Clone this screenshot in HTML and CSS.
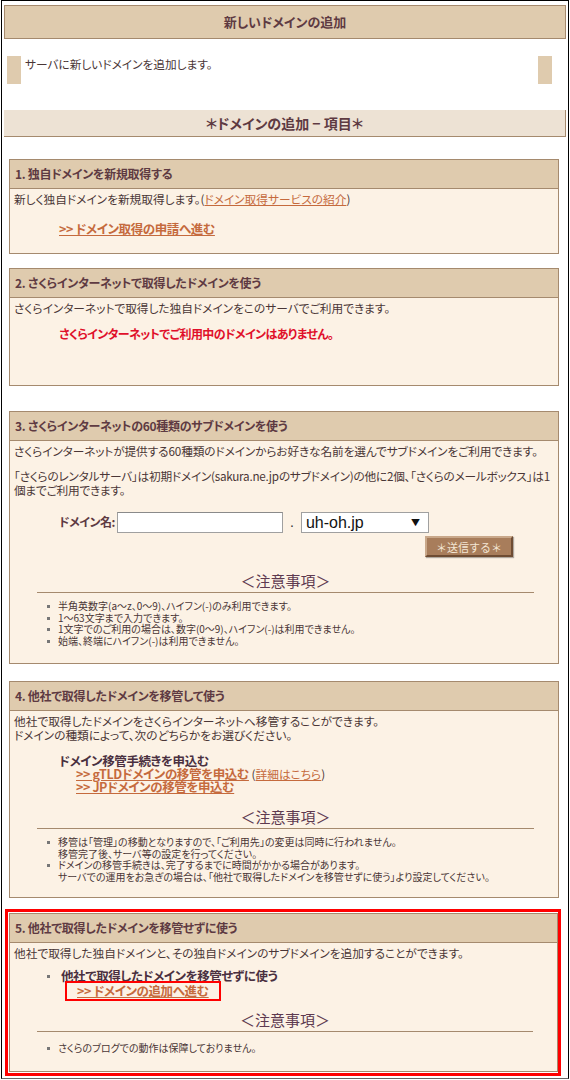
FILE: index.html
```html
<!DOCTYPE html>
<html lang="ja">
<head>
    <meta charset="UTF-8">
    <meta name="viewport" content="width=device-width, initial-scale=1.0">
    <title>新しいドメインの追加</title>
    <link rel="stylesheet" href="styles.css">
</head>
<body>

<div class="page">

    <!-- Page title -->
    <h1 class="page-title">新しいドメインの追加</h1>

    <div class="lead">
        <span class="lead-mark"></span>
        <p class="lead-text">サーバに新しいドメインを追加します。</p>
        <span class="lead-mark"></span>
    </div>

    <h2 class="list-title">＊ドメインの追加 − 項目＊</h2>

    <!-- 1 -->
    <section class="item item-1">
        <h3 class="item-head">1. 独自ドメインを新規取得する</h3>
        <div class="item-body">
            <p>新しく独自ドメインを新規取得します。(<a href="#" class="link-plain">ドメイン取得サービスの紹介</a>)</p>
            <p class="go"><a href="#" class="link-go">&gt;&gt; ドメイン取得の申請へ進む</a></p>
        </div>
    </section>

    <!-- 2 -->
    <section class="item item-2">
        <h3 class="item-head">2. さくらインターネットで取得したドメインを使う</h3>
        <div class="item-body">
            <p>さくらインターネットで取得した独自ドメインをこのサーバでご利用できます。</p>
            <p class="go alert">さくらインターネットでご利用中のドメインはありません。</p>
        </div>
    </section>

    <!-- 3 -->
    <section class="item item-3">
        <h3 class="item-head">3. さくらインターネットの60種類のサブドメインを使う</h3>
        <div class="item-body">
            <p class="tight">さくらインターネットが提供する60種類のドメインからお好きな名前を選んでサブドメインをご利用できます。</p>
            <p class="para">「さくらのレンタルサーバ」は初期ドメイン(sakura.ne.jpのサブドメイン)の他に2個、「さくらのメールボックス」は1個までご利用できます。</p>

            <form class="domain-form">
                <div class="form-row">
                    <label class="form-label" for="sub">ドメイン名:</label>
                    <input class="form-input" type="text" id="sub">
                    <span class="form-dot">.</span>
                    <span class="select-wrap">
                        <select class="form-select">
                            <option>uh-oh.jp</option>
                        </select>
                        <span class="select-arrow">▼</span>
                    </span>
                </div>
                <div class="form-submit">
                    <button type="button" class="btn-send">＊送信する＊</button>
                </div>
            </form>

            <div class="notes">
                <h4 class="notes-title">＜注意事項＞</h4>
                <ul class="notes-list">
                    <li>半角英数字(a～z、0～9)、ハイフン(-)のみ利用できます。</li>
                    <li>1～63文字まで入力できます。</li>
                    <li>1文字でのご利用の場合は、数字(0～9)、ハイフン(-)は利用できません。</li>
                    <li>始端、終端にハイフン(-)は利用できません。</li>
                </ul>
            </div>
        </div>
    </section>

    <!-- 4 -->
    <section class="item item-4">
        <h3 class="item-head">4. 他社で取得したドメインを移管して使う</h3>
        <div class="item-body">
            <p>他社で取得したドメインをさくらインターネットへ移管することができます。<br>ドメインの種類によって、次のどちらかをお選びください。</p>
            <div class="transfer">
                <p class="sub-head">ドメイン移管手続きを申込む</p>
                <p class="sub-link"><a href="#" class="link-go">&gt;&gt; gTLDドメインの移管を申込む</a> (<a href="#" class="link-plain">詳細はこちら</a>)</p>
                <p class="sub-link"><a href="#" class="link-go">&gt;&gt; JPドメインの移管を申込む</a></p>
            </div>

            <div class="notes">
                <h4 class="notes-title">＜注意事項＞</h4>
                <ul class="notes-list">
                    <li>移管は「管理」の移動となりますので、「ご利用先」の変更は同時に行われません。<br>移管完了後、サーバ等の設定を行ってください。</li>
                    <li>ドメインの移管手続きは、完了するまでに時間がかかる場合があります。<br>サーバでの運用をお急ぎの場合は、「他社で取得したドメインを移管せずに使う」より設定してください。</li>
                </ul>
            </div>
        </div>
    </section>

    <!-- 5 (highlighted) -->
    <div class="highlight">
        <section class="item item-5">
            <h3 class="item-head">5. 他社で取得したドメインを移管せずに使う</h3>
            <div class="item-body">
                <p>他社で取得した独自ドメインと、その独自ドメインのサブドメインを追加することができます。</p>
                <ul class="choice">
                    <li>
                        <span class="sub-head">他社で取得したドメインを移管せずに使う</span><br>
                        <a href="#" class="link-go link-marked">&gt;&gt; ドメインの追加へ進む</a>
                    </li>
                </ul>

                <div class="notes">
                    <h4 class="notes-title">＜注意事項＞</h4>
                    <ul class="notes-list">
                        <li>さくらのブログでの動作は保障しておりません。</li>
                    </ul>
                </div>
            </div>
        </section>
    </div>

</div>

</body>
</html>
```

FILE: styles.css
```css
/* Base */
body {
    margin: 0;
    background: #fff;
    font-family: "Noto Sans CJK JP", "Noto Sans", sans-serif;
    font-size: 11.7px;
    color: #4a3636;
    font-feature-settings: "palt";
}

p, h1, h2, h3, h4, ul {
    margin: 0;
}

/* Outer frame */
.page {
    box-sizing: border-box;
    width: 568px;
    height: 1079px;
    margin-left: 1px;
    border: 1px solid #000;
    border-bottom-color: #666;
    padding: 4px 2px 0 2px;
    overflow: hidden;
}

/* Page title bar */
.page-title {
    height: 34px;
    line-height: 32px;
    box-sizing: border-box;
    border: 1px solid #a58a6e;
    background: #dfcbae;
    color: #5e3a42;
    font-size: 13px;
    font-weight: bold;
    text-align: center;
}

/* Lead line with tan marks on both sides */
.lead {
    display: flex;
    align-items: flex-start;
    margin: 17px 14px 0 3px;
    height: 28px;
}

.lead-mark {
    width: 14px;
    height: 28px;
    background: #dfcbae;
    flex-shrink: 0;
}

.lead-text {
    flex: 1;
    padding: 1px 4px;
    line-height: 14px;
    color: #4a3636;
}

/* List title */
.list-title {
    margin-top: 26px;
    height: 27px;
    line-height: 26px;
    box-sizing: border-box;
    background: #ede2d4;
    border-right: 1px solid #a58a6e;
    border-bottom: 1px solid #a58a6e;
    color: #5e3a42;
    font-size: 14px;
    font-weight: bold;
    text-align: center;
}

/* Item boxes */
.item {
    margin: 0 7px 0 5px;
    border: 1px solid #a58a6e;
    background: #fcf2e5;
}

.item-1 { margin-top: 22px; }
.item-2 { margin-top: 14px; }
.item-3 { margin-top: 25px; }
.item-4 { margin-top: 17px; }

.item-head {
    height: 29px;
    line-height: 28px;
    box-sizing: border-box;
    padding-left: 5px;
    background: #dfcbae;
    border-bottom: 1px solid #a58a6e;
    color: #5e3a42;
    font-size: 12px;
    font-weight: bold;
    letter-spacing: -0.3px;
}

.item-body {
    padding: 3px 2px 0 4px;
    line-height: 14px;
}

.item-1 .item-body { height: 61px; }
.item-2 .item-body { height: 84px; }
.item-3 .item-body { height: 219px; }
.item-4 .item-body { height: 183px; }

.tight {
    letter-spacing: -0.12px;
}

.para {
    margin-top: 11px;
    letter-spacing: -0.25px;
}

.go {
    margin: 16px 0 0 45px;
}

.alert {
    margin-top: 12px;
    color: #e0102a;
    font-size: 12px;
    font-weight: bold;
    letter-spacing: -0.6px;
}

/* Links */
.link-go {
    color: #c56a3d;
    font-weight: bold;
    font-size: 12.5px;
    letter-spacing: -0.4px;
}

.link-plain {
    color: #c56a3d;
}

/* Subdomain form */
.domain-form {
    margin-top: 15px;
}

.form-row {
    display: flex;
    align-items: center;
    padding-left: 45px;
    height: 20px;
}

.form-label {
    color: #5e3a42;
    font-size: 12px;
    font-weight: bold;
    letter-spacing: -0.5px;
    margin-right: 2px;
}

.form-input {
    box-sizing: border-box;
    width: 166px;
    height: 21px;
    border: 1px solid #a0a0a0;
    border-top-color: #8a8a8a;
    background: #fff;
    padding: 0 3px;
    margin: 0;
}

.form-dot {
    width: 18px;
    text-align: center;
    font-family: "Liberation Sans", sans-serif;
    font-size: 14px;
    color: #333;
}

.select-wrap {
    position: relative;
    display: inline-block;
}

.form-select {
    -webkit-appearance: none;
    appearance: none;
    box-sizing: border-box;
    width: 128px;
    height: 21px;
    border: 1px solid #a0a0a0;
    background: #fff;
    padding: 0 0 0 4px;
    font-family: "Liberation Sans", sans-serif;
    font-size: 16px;
    color: #111;
    margin: 0;
}

.select-arrow {
    position: absolute;
    right: 9px;
    top: 4px;
    font-size: 9px;
    color: #111;
    pointer-events: none;
}

.form-submit {
    display: flex;
    justify-content: flex-end;
    padding-right: 43px;
    margin-top: 4px;
}

.btn-send {
    width: 88px;
    height: 21px;
    padding: 0;
    background: #a87d5b;
    color: #f4e6d4;
    font-family: inherit;
    font-size: 11px;
    border: 2px solid;
    border-color: #c9a88a #6e4c33 #6e4c33 #c9a88a;
    box-shadow: 1px 1px 1px rgba(0, 0, 0, 0.3);
}

/* Notes */
.notes {
    margin: 15px 22px 0 23px;
}

.item-4 .notes { margin-top: 15px; }
.item-5 .notes { margin-top: 12px; }

.notes-title {
    text-align: center;
    font-size: 15px;
    font-weight: normal;
    color: #5e3a50;
    line-height: 18px;
    padding-bottom: 2px;
    border-bottom: 1px solid #a58a6e;
}

.notes-list {
    list-style: none;
    padding: 7px 0 0 21px;
    font-size: 10px;
    line-height: 11.5px;
    color: #4a3636;
}

.item-5 .notes-list { padding-top: 10px; }

.notes-list li {
    position: relative;
}

.notes-list li::before {
    content: "";
    position: absolute;
    left: -11px;
    top: 5px;
    width: 3px;
    height: 3px;
    background: #777;
}

/* Transfer block */
.transfer {
    margin: 12px 0 0 45px;
}

.sub-head {
    font-size: 12.5px;
    font-weight: bold;
    letter-spacing: -0.4px;
    color: #4a3040;
    line-height: 13px;
}

.sub-link {
    padding-left: 17px;
    line-height: 13px;
}

/* Highlighted section 5 */
.highlight {
    margin: 11px 5px 0 1px;
    border: 3px solid #ff0000;
    padding: 1px 0 1px 1px;
}

.item-5 {
    margin: 0;
}

.item-5 .item-body { height: 125px; }

.choice {
    list-style: none;
    margin-top: 9px;
    padding-left: 47px;
    line-height: 14px;
    position: relative;
}

.choice li::before {
    content: "";
    position: absolute;
    left: 33px;
    top: 6px;
    width: 3px;
    height: 3px;
    background: #777;
}

.link-marked {
    display: inline-block;
    margin: 0 0 0 6px;
    padding: 0 10px;
    outline: 2px solid #ff0000;
    line-height: 16px;
}
```
